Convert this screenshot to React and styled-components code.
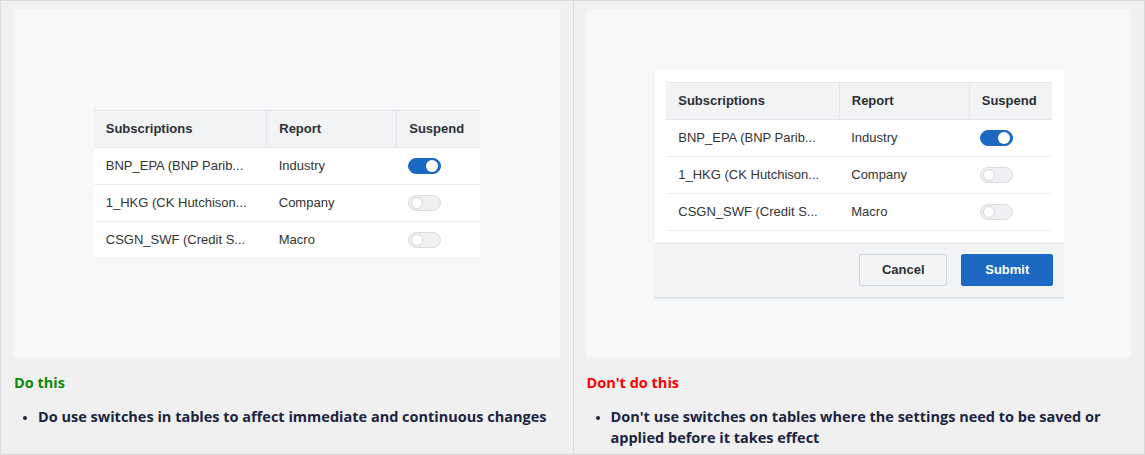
import * as React from "react";
import styled, { createGlobalStyle } from "styled-components";

const GlobalStyle = createGlobalStyle`
  html, body {
    margin: 0;
    padding: 0;
    background: #ffffff;
  }
  * {
    box-sizing: border-box;
  }
`;

/* ---- Page frame ---- */

const Frame = styled.div`
  display: grid;
  grid-template-columns: 1fr 1fr;
  width: 1145px;
  height: 455px;
  border: 1px solid #dadada;
  background: #f0f0f0;
`;

const Column = styled.section`
  display: flex;
  flex-direction: column;
  padding: 8px 13px 0 13px;
  border-left: ${(p) => (p.divided ? "1px solid #d9d9d9" : "none")};
`;

const Canvas = styled.div`
  display: flex;
  align-items: center;
  justify-content: center;
  height: 348px;
  padding-top: 2px;
  background: #f7f8fa;
`;

/* ---- Table ---- */

const Table = styled.table`
  width: 386px;
  border-collapse: collapse;
  table-layout: fixed;
  font-family: "Liberation Sans", Arial, sans-serif;
  font-size: 13px;
  color: #333;
`;

const HeadCell = styled.th`
  height: 37px;
  padding: 0 12px;
  text-align: left;
  font-weight: bold;
  color: #2b2f33;
  background: #f2f3f5;
  border-top: 1px solid #e4e6ea;
  border-bottom: 1px solid #e4e6ea;
  & + & {
    border-left: 1px solid #e4e6ea;
  }
`;

const Cell = styled.td`
  height: 37px;
  padding: 0 12px;
  background: #ffffff;
  border-bottom: 1px solid #eceef1;
  white-space: nowrap;
  overflow: hidden;
`;

const Track = styled.span`
  display: inline-flex;
  align-items: center;
  width: 33px;
  height: 16px;
  border-radius: 8px;
  padding: 0 2px;
  vertical-align: middle;
  justify-content: ${(p) => (p.on ? "flex-end" : "flex-start")};
  background: ${(p) => (p.on ? "#1c69c4" : "#eff0f2")};
  border: 1px solid ${(p) => (p.on ? "#1c69c4" : "#d9dce0")};
`;

const Knob = styled.span`
  width: 12px;
  height: 12px;
  border-radius: 50%;
  background: #ffffff;
  border: ${(p) => (p.on ? "none" : "1px solid #d3d6db")};
`;

function Switch({ on }) {
  return (
    <Track on={on}>
      <Knob on={on} />
    </Track>
  );
}

const rows = [
  { name: "BNP_EPA (BNP Parib...", report: "Industry", on: true },
  { name: "1_HKG (CK Hutchison...", report: "Company", on: false },
  { name: "CSGN_SWF (Credit S...", report: "Macro", on: false },
];

function SubscriptionTable() {
  return (
    <Table>
      <colgroup>
        <col style={{ width: 173 }} />
        <col style={{ width: 130 }} />
        <col style={{ width: 83 }} />
      </colgroup>
      <thead>
        <tr>
          <HeadCell>Subscriptions</HeadCell>
          <HeadCell>Report</HeadCell>
          <HeadCell>Suspend</HeadCell>
        </tr>
      </thead>
      <tbody>
        {rows.map((r) => (
          <tr key={r.name}>
            <Cell>{r.name}</Cell>
            <Cell>{r.report}</Cell>
            <Cell style={{ paddingLeft: 11 }}>
              <Switch on={r.on} />
            </Cell>
          </tr>
        ))}
      </tbody>
    </Table>
  );
}

/* ---- Form panel (the "don't" example) ---- */

const Panel = styled.div`
  width: 409px;
  margin-left: 2px;
  background: #ffffff;
`;

const PanelBody = styled.div`
  padding: 12px 11px 12px 11px;
`;

const Footer = styled.div`
  display: flex;
  justify-content: flex-end;
  gap: 14px;
  height: 56px;
  padding: 10px 11px 0 0;
  background: #f2f3f5;
  border-top: 1px solid #dfe2e6;
  border-bottom: 2px solid #dfe2e6;
`;

const Button = styled.button`
  width: ${(p) => (p.primary ? "92px" : "88px")};
  height: 32px;
  border-radius: 2px;
  font-family: "Liberation Sans", Arial, sans-serif;
  font-size: 13px;
  font-weight: bold;
  color: ${(p) => (p.primary ? "#ffffff" : "#2b2f33")};
  background: ${(p) => (p.primary ? "#1c69c4" : "#f3f4f6")};
  border: 1px solid ${(p) => (p.primary ? "#1c69c4" : "#cfd3d8")};
`;

/* ---- Guidance text ---- */

const Heading = styled.div`
  margin-top: 16px;
  font-family: "Open Sans", "Noto Sans", sans-serif;
  font-size: 14.5px;
  font-weight: 700;
  line-height: 20px;
  color: ${(p) => p.color};
`;

const Notes = styled.ul`
  margin: 13px 0 0 0;
  padding: 0 0 0 24px;
  font-family: "Open Sans", "Noto Sans", sans-serif;
  font-size: 14.5px;
  font-weight: 700;
  line-height: 21px;
  color: #1b2440;
  li::marker {
    font-size: 12px;
  }
`;

export default function App() {
  return (
    <>
      <GlobalStyle />
      <Frame>
        <Column>
          <Canvas>
            <SubscriptionTable />
          </Canvas>
          <Heading color="#0a8a0a">Do this</Heading>
          <Notes>
            <li>Do use switches in tables to affect immediate and continuous changes</li>
          </Notes>
        </Column>
        <Column divided>
          <Canvas>
            <Panel>
              <PanelBody>
                <SubscriptionTable />
              </PanelBody>
              <Footer>
                <Button>Cancel</Button>
                <Button primary>Submit</Button>
              </Footer>
            </Panel>
          </Canvas>
          <Heading color="#ff0000">Don't do this</Heading>
          <Notes>
            <li>
              Don't use switches on tables where the settings need to be saved or applied before it
              takes effect
            </li>
          </Notes>
        </Column>
      </Frame>
    </>
  );
}
